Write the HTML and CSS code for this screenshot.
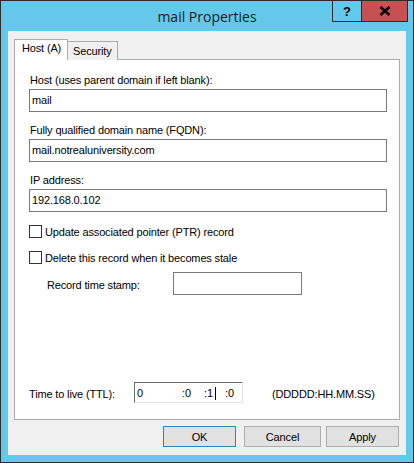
FILE: index.html
```html
<!DOCTYPE html>
<html lang="en">
<head>
  <meta charset="UTF-8">
  <title>mail Properties</title>
  <link rel="stylesheet" href="styles.css">
</head>
<body>
  <div class="window">
    <div class="titlebar">
      <span class="title">mail Properties</span>
      <div class="caption-btns">
        <div class="cap-btn help">?</div>
        <div class="cap-btn close">
          <svg width="12" height="10" viewBox="0 0 12 10">
            <path d="M1.5 1 L10.5 9 M10.5 1 L1.5 9" stroke="#000" stroke-width="2.4" fill="none"/>
          </svg>
        </div>
      </div>
    </div>

    <div class="client">
      <div class="tabs">
        <div class="tab active">Host (A)</div>
        <div class="tab">Security</div>
      </div>

      <div class="panel">
        <div class="field first">
          <label>Host (uses parent domain if left blank):</label>
          <div class="textbox">mail</div>
        </div>
        <div class="field">
          <label>Fully qualified domain name (FQDN):</label>
          <div class="textbox">mail.notrealuniversity.com</div>
        </div>
        <div class="field">
          <label>IP address:</label>
          <div class="textbox">192.168.0.102</div>
        </div>

        <div class="check first-check">
          <span class="box"></span>
          <span>Update associated pointer (PTR) record</span>
        </div>
        <div class="check">
          <span class="box"></span>
          <span>Delete this record when it becomes stale</span>
        </div>

        <div class="stamp-row">
          <span class="stamp-label">Record time stamp:</span>
          <div class="stamp-box"></div>
        </div>

        <div class="ttl-row">
          <span class="ttl-label">Time to live (TTL):</span>
          <div class="ttl-box">
            <span class="seg d">0</span>
            <span class="seg h">:0</span>
            <span class="seg m">:1<i class="caret"></i></span>
            <span class="seg s">:0</span>
          </div>
          <span class="ttl-fmt">(DDDDD:HH.MM.SS)</span>
        </div>
      </div>

      <div class="buttons">
        <div class="btn default">OK</div>
        <div class="btn cancel">Cancel</div>
        <div class="btn apply">Apply</div>
      </div>
    </div>
  </div>
</body>
</html>
```

FILE: styles.css
```css
* {
  box-sizing: border-box;
}

body {
  margin: 0;
  font-family: "Liberation Sans", Arial, sans-serif;
  font-size: 11px;
  letter-spacing: -0.15px;
  color: #000;
}

.window {
  width: 414px;
  height: 463px;
  border: 1px solid #2b2b2b;
  background: #63c8ea;
  padding: 0 7px 7px 7px;
  display: flex;
  flex-direction: column;
}

.titlebar {
  position: relative;
  height: 30px;
  margin: 0 -7px;
  display: flex;
  align-items: center;
  justify-content: center;
}

.title {
  font-family: "Open Sans", "Noto Sans", sans-serif;
  font-size: 14px;
  letter-spacing: 0;
  color: #1b1b1b;
  padding-top: 1px;
}

.caption-btns {
  position: absolute;
  top: -1px;
  right: 5px;
  display: flex;
}

.cap-btn {
  height: 22px;
  border: 1px solid #2b2b2b;
  display: flex;
  align-items: center;
  justify-content: center;
  font-family: "Liberation Sans", Arial, sans-serif;
  font-weight: bold;
  font-size: 13px;
}

.cap-btn.help {
  width: 29px;
  border-right: none;
}

.cap-btn.close {
  width: 47px;
  background: #c75050;
}

.client {
  flex: 1;
  background: #f0f0f0;
  padding: 8px 6px 0 6px;
}

.tabs {
  display: flex;
  align-items: flex-end;
  height: 21px;
  margin-bottom: -1px;
  position: relative;
  z-index: 1;
}

.tab {
  height: 19px;
  border: 1px solid #acacac;
  border-bottom: none;
  background: #f0f0f0;
  padding: 3px 5px 0 5px;
  margin-left: -1px;
}

.tab:first-child {
  margin-left: 0;
}

.tab.active {
  height: 21px;
  width: 54px;
  background: #fff;
  padding: 2px 0 0 7px;
  z-index: 2;
}

.panel {
  width: 386px;
  height: 361px;
  background: #fff;
  border: 1px solid #acacac;
  padding: 0 12px 0 14px;
  display: flex;
  flex-direction: column;
}

.field {
  margin-top: 12px;
}

.field.first {
  margin-top: 14px;
}

.field label {
  display: block;
  line-height: 13px;
  padding-left: 1px;
  margin-bottom: 2px;
}

.textbox {
  height: 23px;
  border: 1px solid #7a7a7a;
  line-height: 20px;
  padding-left: 2px;
}

.check {
  display: flex;
  align-items: center;
  height: 13px;
  margin-top: 13px;
}

.check .box {
  width: 13px;
  height: 13px;
  border: 1px solid #333;
  margin-right: 3px;
  background: #fff;
}

.stamp-row {
  display: flex;
  align-items: center;
  margin-top: 8px;
  padding-left: 18px;
}

.stamp-label {
  width: 126px;
  padding-top: 2px;
}

.stamp-box {
  width: 129px;
  height: 23px;
  border: 1px solid #7a7a7a;
}

.ttl-row {
  display: flex;
  align-items: center;
  margin-top: auto;
  margin-bottom: 16px;
}

.ttl-label {
  width: 105px;
  padding-top: 2px;
}

.ttl-box {
  width: 109px;
  height: 21px;
  border: 1px solid #e3e3e3;
  border-top-color: #6d6d6d;
  border-left-color: #6d6d6d;
  display: flex;
  align-items: center;
  padding-top: 1px;
}

.seg {
  display: flex;
  align-items: center;
}

.seg.d {
  width: 47px;
  padding-left: 2px;
}

.seg.h {
  width: 22px;
}

.seg.m {
  width: 21px;
}

.caret {
  display: inline-block;
  width: 1px;
  height: 13px;
  background: #000;
  margin-left: 2px;
}

.ttl-fmt {
  margin-left: 29px;
  padding-top: 2px;
}

.buttons {
  display: flex;
  justify-content: flex-end;
  gap: 8px;
  padding: 6px 1px 0 0;
}

.btn {
  height: 21px;
  width: 73px;
  background: #e1e1e1;
  border: 1px solid #adadad;
  display: flex;
  align-items: center;
  justify-content: center;
  padding-top: 1px;
}

.btn.default {
  border-color: #3c7fb1;
}

.btn.cancel {
  width: 77px;
}

.btn.apply {
  margin-left: -3px;
}
```
